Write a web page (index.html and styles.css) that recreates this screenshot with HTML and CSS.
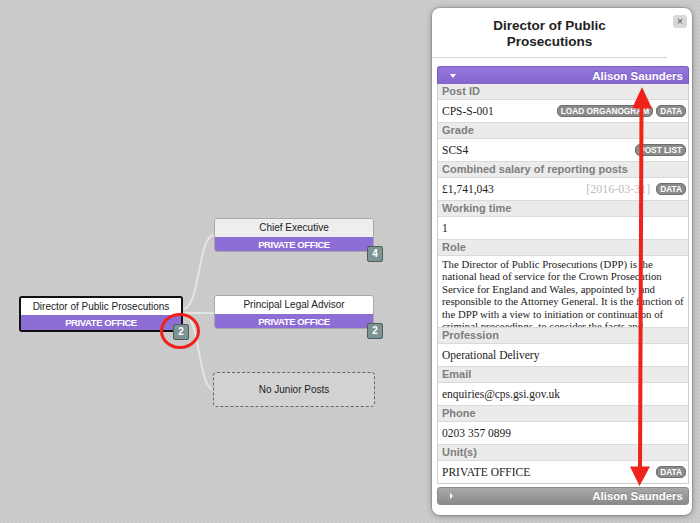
FILE: index.html
```html
<!DOCTYPE html>
<html lang="en">
<head>
<meta charset="utf-8">
<title>Organogram – Director of Public Prosecutions</title>
<link rel="stylesheet" href="styles.css">
</head>
<body>
<main class="canvas">
  <svg class="links" width="700" height="523" viewBox="0 0 700 523" aria-hidden="true">
    <path d="M183 309 C200 309 198 235 214 235"/>
    <path d="M183 313 L214 313"/>
    <path d="M183 313 C200 313 198 390 214 390"/>
  </svg>

  <div class="node node-root n-root">
    <div class="node-title">Director of Public Prosecutions</div>
    <div class="node-unit">PRIVATE OFFICE</div>
  </div>
  <span class="badge b-root">2</span>

  <div class="node node-child n-ce">
    <div class="node-title grey">Chief Executive</div>
    <div class="node-unit">PRIVATE OFFICE</div>
  </div>
  <span class="badge b-ce">4</span>

  <div class="node node-child n-pla">
    <div class="node-title">Principal Legal Advisor</div>
    <div class="node-unit">PRIVATE OFFICE</div>
  </div>
  <span class="badge b-pla">2</span>

  <div class="node-empty n-empty">No Junior Posts</div>

  <svg class="ring" width="700" height="523" viewBox="0 0 700 523" aria-hidden="true">
    <ellipse cx="180" cy="331" rx="18.5" ry="16.5"/>
  </svg>

  <aside class="panel">
    <header class="panel-head">
      <h1 class="panel-title">Director of Public Prosecutions</h1>
      <button class="close" type="button">×</button>
    </header>
    <section class="acc">
      <div class="acc-head open"><span class="tri tri-down"></span><span class="acc-name">Alison Saunders</span></div>
      <div class="acc-body">
        <div class="lbl">Post ID</div>
        <div class="val"><span class="txt">CPS-S-001</span><span class="btn">Load organogram</span><span class="btn">Data</span></div>
        <div class="lbl">Grade</div>
        <div class="val"><span class="txt">SCS4</span><span class="btn">Post list</span></div>
        <div class="lbl">Combined salary of reporting posts</div>
        <div class="val"><span class="txt">£1,741,043</span><span class="date">[2016-03-31]</span><span class="btn">Data</span></div>
        <div class="lbl">Working time</div>
        <div class="val"><span class="txt">1</span></div>
        <div class="lbl">Role</div>
        <div class="role">The Director of Public Prosecutions (DPP) is the<br>national head of service for the Crown Prosecution<br>Service for England and Wales, appointed by and<br>responsible to the Attorney General. It is the function of<br>the DPP with a view to initiation or continuation of<br>criminal proceedings, to consider the facts and</div>
        <div class="lbl">Profession</div>
        <div class="val"><span class="txt">Operational Delivery</span></div>
        <div class="lbl">Email</div>
        <div class="val"><span class="txt">enquiries@cps.gsi.gov.uk</span></div>
        <div class="lbl">Phone</div>
        <div class="val"><span class="txt">0203 357 0899</span></div>
        <div class="lbl">Unit(s)</div>
        <div class="val"><span class="txt">PRIVATE OFFICE</span><span class="btn">Data</span></div>
      </div>
      <div class="acc-head closed"><span class="tri tri-right"></span><span class="acc-name">Alison Saunders</span></div>
    </section>
  </aside>

  <svg class="arrow" width="700" height="523" viewBox="0 0 700 523" aria-hidden="true">
    <line x1="641.5" y1="104" x2="640" y2="470"/>
    <polygon points="642,87 632,108.5 652,108.5"/>
    <polygon points="639.5,486 630,466.5 650,466.5"/>
  </svg>
</main>
</body>
</html>
```

FILE: styles.css
```css
html, body {
  margin: 0;
  padding: 0;
}

body {
  width: 700px;
  height: 523px;
  overflow: hidden;
  font-family: "Liberation Sans", Arial, sans-serif;
  background-color: #cbcbcb;
  background-image: linear-gradient(45deg, #c8c8c8 25%, #cdcdcd 25%, #cdcdcd 50%, #c8c8c8 50%, #c8c8c8 75%, #cdcdcd 75%);
  background-size: 4px 4px;
}

.canvas {
  position: relative;
  width: 700px;
  height: 523px;
}

/* connectors */
.links {
  position: absolute;
  left: 0;
  top: 0;
}
.links path {
  fill: none;
  stroke: #e4e4e4;
  stroke-width: 2;
}

/* diagram nodes */
.node {
  position: absolute;
  box-sizing: border-box;
  display: flex;
  flex-direction: column;
  overflow: hidden;
  text-align: center;
}
.node-root {
  width: 164px;
  height: 36px;
  border: 2px solid #111;
  border-radius: 3px;
}
.node-child {
  width: 160px;
  height: 34px;
  border: 1px solid #a8a8a8;
  border-radius: 3px;
}
.node-title {
  background: #fff;
  color: #222;
  font-size: 10px;
  height: 17px;
  line-height: 17px;
  white-space: nowrap;
}
.node-child .node-title {
  height: 18px;
  line-height: 18px;
}
.node-title.grey {
  background: #eeeeee;
}
.node-unit {
  flex: 1;
  background: #8d6dd6;
  color: #fff;
  font-weight: bold;
  font-size: 9.5px;
  letter-spacing: -0.4px;
  display: flex;
  align-items: center;
  justify-content: center;
}

.n-root { left: 19px; top: 296px; }
.n-ce { left: 214px; top: 218px; }
.n-pla { left: 214px; top: 295px; }

.node-empty {
  position: absolute;
  box-sizing: border-box;
  width: 162px;
  height: 35px;
  border: 1px dashed #666;
  border-radius: 4px;
  background: #d2d2d2;
  color: #222;
  font-size: 10px;
  display: flex;
  align-items: center;
  justify-content: center;
}
.n-empty { left: 213px; top: 372px; }

.badge {
  position: absolute;
  box-sizing: border-box;
  width: 16px;
  height: 16px;
  border: 1px solid #4d5d5d;
  border-radius: 2px;
  background: #7c9493;
  color: #fff;
  font-weight: bold;
  font-size: 10px;
  line-height: 14px;
  text-align: center;
}
.b-root { left: 173px; top: 324px; }
.b-ce { left: 367px; top: 246px; }
.b-pla { left: 367px; top: 323px; }

/* annotations */
.ring, .arrow {
  position: absolute;
  left: 0;
  top: 0;
  pointer-events: none;
}
.ring ellipse {
  fill: none;
  stroke: #ee2219;
  stroke-width: 3;
}
.arrow line {
  stroke: #f0231a;
  stroke-width: 4;
}
.arrow polygon {
  fill: #f0231a;
}

/* side panel */
.panel {
  position: absolute;
  left: 432px;
  top: 8px;
  width: 260px;
  height: 507px;
  box-sizing: border-box;
  background: #fff;
  border-radius: 8px;
  box-shadow: 0 0 0 1px rgba(0,0,0,0.12), 0 1px 6px rgba(0,0,0,0.35);
  padding-bottom: 9px;
}

.panel-head {
  display: flex;
  align-items: flex-start;
}
.panel-title {
  margin: 0;
  width: 235px;
  box-sizing: border-box;
  padding: 10px 26px 8px;
  border-bottom: 1px solid #d6d6d6;
  font-size: 13.5px;
  line-height: 15.5px;
  font-weight: bold;
  color: #222;
  text-align: center;
}
.close {
  margin: 7px 0 0 6px;
  width: 14px;
  height: 13px;
  padding: 0;
  border: 0;
  border-radius: 3px;
  background: #d8d8d8;
  color: #555;
  font-family: "Liberation Sans", Arial, sans-serif;
  font-size: 11px;
  line-height: 13px;
  text-align: center;
}

.acc {
  margin: 8px 3px 0 5px;
  display: flex;
  flex-direction: column;
}
.acc-head {
  box-sizing: border-box;
  height: 18px;
  display: flex;
  align-items: center;
  justify-content: space-between;
  padding: 0 5px 0 12px;
  color: #fff;
  font-weight: bold;
  font-size: 11.5px;
  border-radius: 3px;
}
.acc-head.open {
  background: linear-gradient(#9677de, #8566cf);
  border: 1px solid #7a5cc4;
  border-bottom: 0;
  border-radius: 3px 3px 0 0;
  text-shadow: 0 -1px 0 rgba(60,30,120,0.25);
}
.acc-head.closed {
  margin-top: 3px;
  background: linear-gradient(#a9a9a9, #8a8a8a);
  border: 1px solid #8a8a8a;
  text-shadow: 0 -1px 0 rgba(0,0,0,0.2);
}
.tri {
  width: 0;
  height: 0;
}
.tri-down {
  border-left: 3px solid transparent;
  border-right: 3px solid transparent;
  border-top: 4px solid #fff;
}
.tri-right {
  border-top: 3px solid transparent;
  border-bottom: 3px solid transparent;
  border-left: 3px solid #fff;
}

.acc-body {
  border-left: 1px solid #cfcfcf;
  border-right: 1px solid #cfcfcf;
}
.lbl {
  height: 15px;
  line-height: 15px;
  background: #ebebeb;
  border-bottom: 1px solid #dadada;
  padding-left: 4px;
  color: #7e7e7e;
  font-weight: bold;
  font-size: 11px;
  white-space: nowrap;
}
.val {
  height: 22px;
  border-bottom: 1px solid #dadada;
  display: flex;
  align-items: center;
  gap: 3px;
  padding: 0 2px 0 4px;
  font-family: "Liberation Serif", "Times New Roman", serif;
  font-size: 11.5px;
  color: #222;
}
.val:last-child {
  border-bottom-color: #cfcfcf;
}
.txt {
  flex: 1;
  white-space: nowrap;
}
.date {
  color: #bdbdbd;
  font-size: 12px;
  margin-right: 3px;
}
.btn {
  box-sizing: border-box;
  height: 12px;
  padding: 0 3px;
  border: 1px solid #6f6f6f;
  border-radius: 5px;
  background: #8b8b8b;
  color: #fff;
  font-family: "Liberation Sans", Arial, sans-serif;
  font-weight: bold;
  font-size: 8.3px;
  line-height: 10px;
  text-transform: uppercase;
  white-space: nowrap;
}
.role {
  height: 72px;
  box-sizing: border-box;
  overflow: hidden;
  padding: 2px 0 0 4px;
  border-bottom: 1px solid #dadada;
  font-family: "Liberation Serif", "Times New Roman", serif;
  font-size: 10.8px;
  line-height: 12.4px;
  color: #222;
  white-space: nowrap;
}
```
